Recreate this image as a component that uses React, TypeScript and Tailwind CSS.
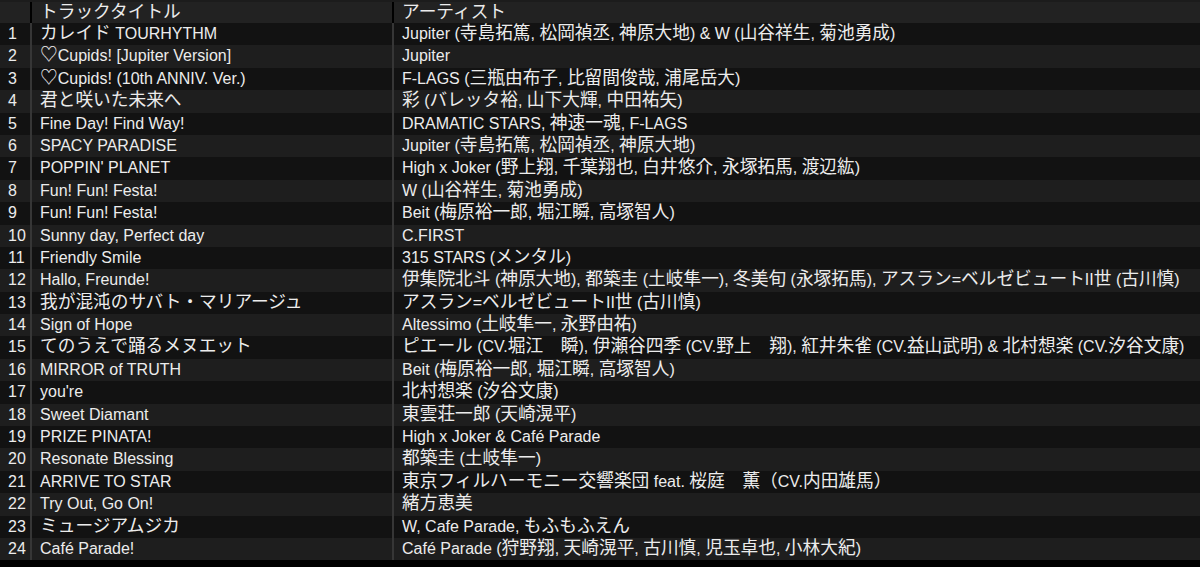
const tracks: [string, string][] = [
  ["カレイド TOURHYTHM", "Jupiter (寺島拓篤, 松岡禎丞, 神原大地) & W (山谷祥生, 菊池勇成)"],
  ["♡Cupids! [Jupiter Version]", "Jupiter"],
  ["♡Cupids! (10th ANNIV. Ver.)", "F-LAGS (三瓶由布子, 比留間俊哉, 浦尾岳大)"],
  ["君と咲いた未来へ", "彩 (バレッタ裕, 山下大輝, 中田祐矢)"],
  ["Fine Day! Find Way!", "DRAMATIC STARS, 神速一魂, F-LAGS"],
  ["SPACY PARADISE", "Jupiter (寺島拓篤, 松岡禎丞, 神原大地)"],
  ["POPPIN' PLANET", "High x Joker (野上翔, 千葉翔也, 白井悠介, 永塚拓馬, 渡辺紘)"],
  ["Fun! Fun! Festa!", "W (山谷祥生, 菊池勇成)"],
  ["Fun! Fun! Festa!", "Beit (梅原裕一郎, 堀江瞬, 高塚智人)"],
  ["Sunny day, Perfect day", "C.FIRST"],
  ["Friendly Smile", "315 STARS (メンタル)"],
  ["Hallo, Freunde!", "伊集院北斗 (神原大地), 都築圭 (土岐隼一), 冬美旬 (永塚拓馬), アスラン=ベルゼビュートII世 (古川慎)"],
  ["我が混沌のサバト・マリアージュ", "アスラン=ベルゼビュートII世 (古川慎)"],
  ["Sign of Hope", "Altessimo (土岐隼一, 永野由祐)"],
  ["てのうえで踊るメヌエット", "ピエール (CV.堀江\u3000瞬), 伊瀬谷四季 (CV.野上\u3000翔), 紅井朱雀 (CV.益山武明) & 北村想楽 (CV.汐谷文康)"],
  ["MIRROR of TRUTH", "Beit (梅原裕一郎, 堀江瞬, 高塚智人)"],
  ["you're", "北村想楽 (汐谷文康)"],
  ["Sweet Diamant", "東雲荘一郎 (天崎滉平)"],
  ["PRIZE PINATA!", "High x Joker & Café Parade"],
  ["Resonate Blessing", "都築圭 (土岐隼一)"],
  ["ARRIVE TO STAR", "東京フィルハーモニー交響楽団 feat. 桜庭\u3000薫（CV.内田雄馬）"],
  ["Try Out, Go On!", "緒方恵美"],
  ["ミュージアムジカ", "W, Cafe Parade, もふもふえん"],
  ["Café Parade!", "Café Parade (狩野翔, 天崎滉平, 古川慎, 児玉卓也, 小林大紀)"],
];

const CJK = /([\u2661\u3000-\u30ff\u3400-\u9fff\uff00-\uffef]+)/;

// Japanese runs are drawn a bit larger than the latin text, like the source table.
// leading-none keeps the bigger CJK metrics from stretching the line box.
function Mixed({ text }: { text: string }) {
  return (
    <>
      {text.split(CJK).map((part, i) =>
        i % 2 === 1 ? (
          <span key={i} className="font-['Noto_Sans_CJK_JP',sans-serif] text-[17.7px] leading-none">
            {part}
          </span>
        ) : (
          part && <span key={i}>{part}</span>
        )
      )}
    </>
  );
}

const font = "font-['Liberation_Sans','Noto_Sans_CJK_JP',sans-serif]";

export default function App() {
  return (
    <div className={`w-[1200px] h-[567px] bg-black text-[#ececec] overflow-hidden ${font}`}>
      {/* thin strip above the header */}
      <div className="h-[2px] bg-[#1c1c1c]" />
      {/* header */}
      <div className="flex h-[21px] bg-[#222222] text-[16px] leading-[21px]">
        <div className="w-[32px] shrink-0 border-r-2 border-black" />
        <div className="w-[362px] shrink-0 border-r-2 border-black pl-[8px] whitespace-nowrap">
          <Mixed text="トラックタイトル" />
        </div>
        <div className="flex-1 pl-[8px] whitespace-nowrap">
          <Mixed text="アーティスト" />
        </div>
      </div>
      {tracks.map(([title, artist], i) => (
        <div
          key={i}
          className={`flex h-[22.4px] text-[16px] leading-[22px] ${i % 2 === 0 ? "bg-[#121212]" : "bg-[#1e1e1e]"}`}
        >
          <div className="w-[32px] shrink-0 border-r-2 border-[#363636] pl-[8px] whitespace-nowrap">{i + 1}</div>
          <div className="w-[362px] shrink-0 border-r-2 border-[#363636] pl-[8px] whitespace-nowrap">
            <Mixed text={title} />
          </div>
          <div className="flex-1 pl-[8px] whitespace-nowrap">
            <Mixed text={artist} />
          </div>
        </div>
      ))}
    </div>
  );
}
